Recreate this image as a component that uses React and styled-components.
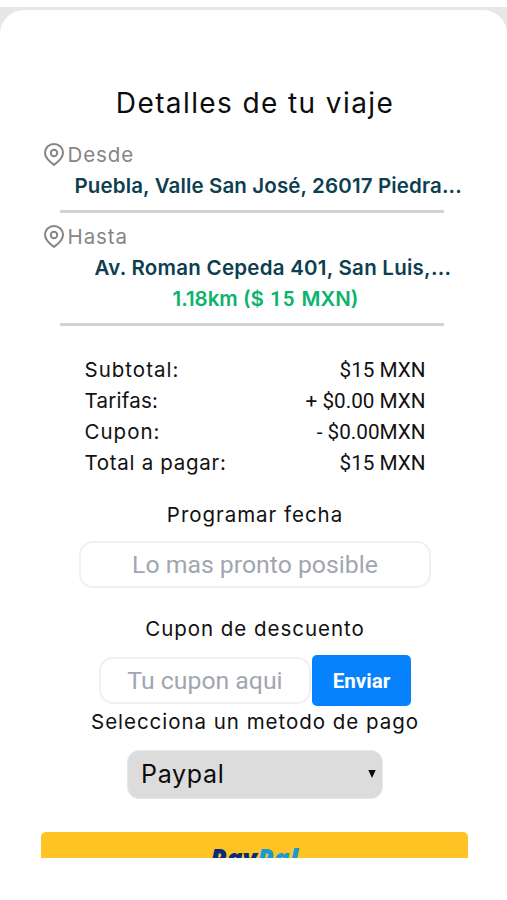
import styled, { createGlobalStyle } from "styled-components";

const GlobalStyle = createGlobalStyle`
  * {
    box-sizing: border-box;
  }
  body {
    margin: 0;
    background-color: white;
    font-family: "Inter", sans-serif;
  }
`;

const Backdrop = styled.div`
  height: 893px;
  margin-top: 7px;
  padding-top: 3px;
  overflow: hidden;
  background-color: #e7e7e7;
`;
const Sheet = styled.main`
  height: 890px;
  padding-left: 3px;
  display: flex;
  flex-direction: column;
  align-items: center;
  background-color: white;
  border-radius: 24px 24px 0 0;
`;
const Title = styled.h1`
  margin: 73px 0 16px;
  font-size: 28px;
  font-weight: 400;
  line-height: 40px;
  letter-spacing: 1.4px;
  white-space: nowrap;
  color: #0c0c0c;
`;
const Trip = styled.section`
  width: 427px;
  margin-bottom: ${(props) => props.$gap}px;
`;
const Place = styled.div`
  height: 31px;
  display: flex;
  align-items: center;
  gap: 4px;
  padding-left: 2px;
  font-size: 20.5px;
  letter-spacing: 0.9px;
  color: #858585;
`;
const Address = styled.div`
  height: 31px;
  padding-left: ${(props) => props.$indent}px;
  font-size: 20.5px;
  font-weight: 600;
  line-height: 31px;
  letter-spacing: ${(props) => props.$tracking}px;
  white-space: nowrap;
  color: #0d3f50;
`;
const Distance = styled(Address)`
  color: #0cb36b;
`;
const Amount = styled.span`
  font-family: "Roboto", sans-serif;
  line-height: 1;
  letter-spacing: 1px;
`;
const Divider = styled.hr`
  width: 384px;
  height: 3px;
  margin: 9px 0 0 18px;
  border: none;
  background-color: #d2d2d2;
`;
const Summary = styled.section`
  width: 341px;
  margin-bottom: 21px;
`;
const SummaryRow = styled.div`
  height: 31px;
  display: flex;
  justify-content: space-between;
  font-size: 20.5px;
  line-height: 31px;
  color: #111;
`;
const SummaryName = styled.span`
  letter-spacing: ${(props) => props.$tracking}px;
`;
const Price = styled.span`
  padding-top: 1px;
  font-family: "Roboto", sans-serif;
  font-size: 20.7px;
  line-height: 30px;
`;
const Label = styled.label`
  height: 31px;
  font-size: 20.5px;
  line-height: 31px;
  letter-spacing: 0.97px;
  white-space: nowrap;
  color: #111;
`;
const Input = styled.input`
  width: ${(props) => props.$width}px;
  height: 47px;
  padding: 0;
  border: 2px solid #f0f0f1;
  border-radius: 14px;
  outline: none;
  background-color: white;
  font-family: "Roboto", sans-serif;
  font-size: 24.8px;
  text-align: center;

  &::placeholder {
    color: #a2a6b0;
    opacity: 1;
  }
`;
const DateInput = styled(Input)`
  margin: 11px 0 25px;
`;
const CouponRow = styled.div`
  margin-top: 11px;
  display: flex;
  align-items: center;
  gap: 1px;
`;
const Button = styled.button`
  width: 99px;
  height: 51px;
  padding: 0;
  border: none;
  border-radius: 5px;
  background-color: #0782ff;
  color: white;
  font-family: "Roboto", sans-serif;
  font-size: 20.6px;
  font-weight: 700;
  cursor: pointer;
`;
const Method = styled.div`
  width: 256px;
  height: 49px;
  margin-top: 13px;
  padding: 0 6px 1px 13px;
  display: flex;
  align-items: center;
  justify-content: space-between;
  border: 1px solid #e8e8e8;
  border-radius: 12px;
  background-color: #dcdcdc;
  font-size: 25px;
  letter-spacing: 0.7px;
  color: #0c0c0c;
`;
const PaypalFrame = styled.div`
  width: 427px;
  height: 26px;
  margin: 33px 2px 0 0;
  overflow: hidden;
`;
const PaypalButton = styled.div`
  height: 52px;
  padding-top: 12px;
  border-radius: 5px;
  background-color: #ffc423;
  text-align: center;
  font-family: "Open Sans", sans-serif;
  font-size: 26.5px;
  font-weight: 800;
  font-style: italic;
  line-height: 28px;
  color: #062a7c;
`;
const Pal = styled.span`
  color: #179bd7;
`;

const PinIcon = () => (
  <svg width="20" height="23" viewBox="0 0 20 23" fill="none" stroke="#858585" strokeWidth="2">
    <path d="M10 21.8 C8.5 20.8 1 15.5 1 9.8 A9 8.8 0 0 1 19 9.8 C19 15.5 11.5 20.8 10 21.8Z" />
    <circle cx="10" cy="10" r="3.2" />
  </svg>
);

const Arrow = () => (
  <svg width="8" height="8" viewBox="0 0 8 8">
    <path d="M0.3 0h7.4L4 8z" fill="#0c0c0c" />
  </svg>
);

const prices = [
  { name: "Subtotal:", price: "$15 MXN", tracking: 1 },
  { name: "Tarifas:", price: "+ $0.00 MXN", tracking: 0.25 },
  { name: "Cupon:", price: "- $0.00MXN", tracking: 1 },
  { name: "Total a pagar:", price: "$15 MXN", tracking: 0.7 },
];

const App = () => {
  return (
    <>
      <GlobalStyle />
      <Backdrop>
        <Sheet>
          <Title>Detalles de tu viaje</Title>
          <Trip $gap={8}>
            <Place>
              <PinIcon />
              Desde
            </Place>
            <Address $indent={33} $tracking={0.13}>
              Puebla, Valle San José, 26017 Piedra...
            </Address>
            <Divider />
          </Trip>
          <Trip $gap={28}>
            <Place>
              <PinIcon />
              Hasta
            </Place>
            <Address $indent={53} $tracking={0.25}>
              Av. Roman Cepeda 401, San Luis,...
            </Address>
            <Distance $indent={131} $tracking={0}>
              1.18km ($<Amount> 15 </Amount>MXN)
            </Distance>
            <Divider />
          </Trip>
          <Summary>
            {prices.map((item) => (
              <SummaryRow key={item.name}>
                <SummaryName $tracking={item.tracking}>{item.name}</SummaryName>
                <Price>{item.price}</Price>
              </SummaryRow>
            ))}
          </Summary>
          <Label>Programar fecha</Label>
          <DateInput $width={352} placeholder="Lo mas pronto posible" />
          <Label>Cupon de descuento</Label>
          <CouponRow>
            <Input $width={212} placeholder="Tu cupon aqui" />
            <Button>Enviar</Button>
          </CouponRow>
          <Label>Selecciona un metodo de pago</Label>
          <Method>
            Paypal
            <Arrow />
          </Method>
          <PaypalFrame>
            <PaypalButton>
              Pay<Pal>Pal</Pal>
            </PaypalButton>
          </PaypalFrame>
        </Sheet>
      </Backdrop>
    </>
  );
};

export default App;
